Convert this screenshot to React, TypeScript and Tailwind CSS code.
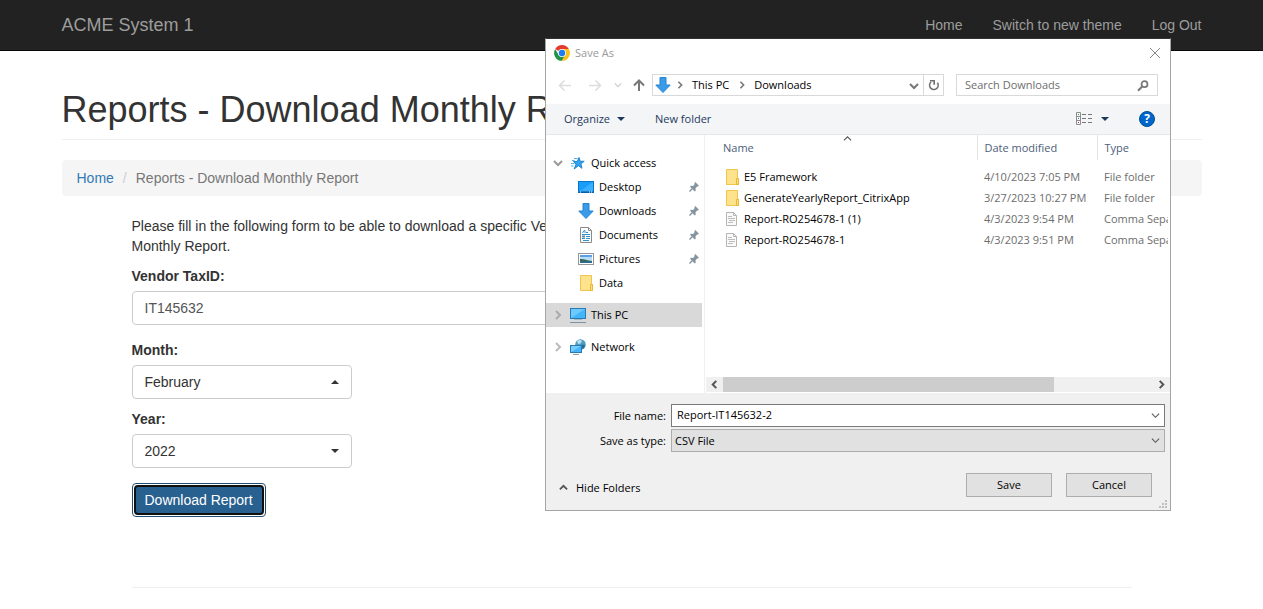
import React from "react";

type IconProps = { className?: string };

function ChromeIcon() {
  return (
    <svg viewBox="0 0 48 48" className="size-4 shrink-0" aria-hidden="true">
      <circle cx="24" cy="24" r="23.5" fill="#fff" />
      <path d="M24 24 L3.6 12.2 A23.5 23.5 0 0 1 44.4 12.2 L24 12.5 Z" fill="#e33b2e" />
      <path d="M3.6 12.2 A23.5 23.5 0 0 0 24 47.5 L34 29.7 L24 24 L14 29.7 Z" fill="#229342" />
      <path d="M44.4 12.2 A23.5 23.5 0 0 1 24 47.5 L34 29.7 L24 12.2 Z" fill="#fbc116" />
      <circle cx="24" cy="24" r="11.8" fill="#fff" />
      <circle cx="24" cy="24" r="9.6" fill="#1f7bf2" />
    </svg>
  );
}

function DownArrowIcon() {
  return (
    <svg viewBox="0 0 16 16" className="size-4 shrink-0" aria-hidden="true">
      <path d="M5 .5h6v7.5h4.2L8 15.5.8 8H5z" fill="#3a9be8" stroke="#2583cf" />
    </svg>
  );
}

function Chevron({
  dir,
  size = 8,
  color = "#555",
  width = 1.5,
}: {
  dir: "up" | "down" | "left" | "right";
  size?: number;
  color?: string;
  width?: number;
}) {
  const paths = {
    up: "M1 6l4-4 4 4",
    down: "M1 3l4 4 4-4",
    left: "M7 1L3 5l4 4",
    right: "M3 1l4 4-4 4",
  };
  return (
    <svg viewBox="0 0 10 10" width={size} height={size} fill="none" stroke={color} strokeWidth={width} className="shrink-0" aria-hidden="true">
      <path d={paths[dir]} />
    </svg>
  );
}

function NavArrow({ dir, className = "" }: { dir: "left" | "right" | "up" } & IconProps) {
  const paths = {
    left: "M13 7.500H1.500M6.500 2.500l-5 5 5 5",
    right: "M1 7.500h11.500M7.500 2.500l5 5-5 5",
    up: "M7 13V2.500M2 7.500l5-5 5 5",
  };
  return (
    <svg viewBox="0 0 14 14" className={"size-3.5 shrink-0 " + className} fill="none" stroke="currentColor" strokeWidth={dir === "up" ? 2 : 1.6} aria-hidden="true">
      <path d={paths[dir]} />
    </svg>
  );
}

function Triangle({ up = false, className = "" }: { up?: boolean } & IconProps) {
  return (
    <svg viewBox="0 0 8 4" className={"h-1 w-2 " + className} fill="currentColor" aria-hidden="true">
      <path d={up ? "M0 4l4-4 4 4z" : "M0 0h8L4 4z"} />
    </svg>
  );
}

function StarIcon() {
  return (
    <svg viewBox="0 0 16 16" className="size-4 shrink-0" aria-hidden="true">
      <path d="M9 2.500l1.200 3.700 4 .1-3.300 2.500 1.100 4.500-3.600-2.600-4.200 3.300 1.900-4.900L3.400 6.500h3.800z" fill="#2fa4f0" stroke="#1a7fc9" strokeWidth=".9" />
      <path d="M4 3.500h3.500M2 5.500h2.500M1 8.500h3.500M1 11h2.500" stroke="#4fb0ee" />
    </svg>
  );
}

function DesktopIcon() {
  return (
    <svg viewBox="0 0 16 16" className="size-4 shrink-0" aria-hidden="true">
      <rect x=".5" y="2.500" width="15" height="11" fill="#1a9df8" stroke="#0b74c4" />
      <path d="M1 13L15 3v10z" fill="#38b0ff" />
      <path d="M1 13h14" stroke="#064b86" />
      <path d="M2 13h1M11 13h1M13 13h1" stroke="#fff" />
    </svg>
  );
}

function DocumentIcon() {
  return (
    <svg viewBox="0 0 16 16" className="size-4 shrink-0" aria-hidden="true">
      <path d="M2.500.5h8l3 3v12h-11z" fill="#fff" stroke="#8a8a8a" />
      <path d="M10.500.5v3h3" fill="none" stroke="#8a8a8a" />
      <path d="M4.500 6l1.500-2.500h1V6M8 5.500h2M4 7.500h8M8 9.500h4M4 11.500h3M8 11.500h4M5 13.500h6" fill="none" stroke="#2a92cf" />
      <path d="M4 8.500h3v2H4z" fill="#5f8ba0" />
    </svg>
  );
}

function PictureIcon() {
  return (
    <svg viewBox="0 0 16 16" className="size-4 shrink-0" aria-hidden="true">
      <rect x=".5" y="2.500" width="15" height="11" fill="#fff" stroke="#969696" />
      <path d="M2 4h12v8H2z" fill="#b9dcf7" />
      <path d="M2 4h12v2H2z" fill="#5d9fe5" />
      <path d="M2 8c3-.5 6 1 12 2v2H2z" fill="#37654f" />
      <path d="M2 10.500h12V12H2z" fill="#2c6e9c" />
    </svg>
  );
}

function FolderIcon() {
  return (
    <svg viewBox="0 0 16 16" className="size-4 shrink-0" aria-hidden="true">
      <path d="M2.500.5h11v9h1v6h-12z" fill="#ffe28c" stroke="#eec54f" />
      <path d="M12.500 9.500h2v6h-2z" fill="#ffdf7d" stroke="#e6b834" />
    </svg>
  );
}

function FileIcon() {
  return (
    <svg viewBox="0 0 16 16" className="size-4 shrink-0" aria-hidden="true">
      <path d="M2.500 1.500h7l3 3v10h-10z" fill="#fafafa" stroke="#b5b5b5" />
      <path d="M9.500 1.500v3h3" fill="none" stroke="#b5b5b5" />
      <path d="M4 5.500h4M4 7.500h7M5 9.500h6M4 11.500h5" stroke="#bcbcbc" />
    </svg>
  );
}

function MonitorIcon() {
  return (
    <svg viewBox="0 0 16 16" className="size-4 shrink-0" aria-hidden="true">
      <rect x=".5" y="1.500" width="15" height="10" fill="#45b5fa" stroke="#2a7ab4" />
      <path d="M1 11L15 2H1z" fill="#6ccaff" />
      <path d="M4 12.500h8" stroke="#9fb7c6" />
      <path d="M0 15.500h16" stroke="#7d93a3" />
    </svg>
  );
}

function NetworkIcon() {
  return (
    <svg viewBox="0 0 16 16" className="size-4 shrink-0" aria-hidden="true">
      <circle cx="10.500" cy="5.500" r="5.300" fill="#4e9cc0" />
      <path d="M7 2c2-1.500 4-1 5 0l-1.500 2.500L8 5z" fill="#b9dfee" />
      <path d="M12 5.500l3 .5-1 3-2.500 1z" fill="#2b6d91" />
      <rect x=".5" y="6.500" width="11" height="7" fill="#45b5fa" stroke="#2a7ab4" />
      <path d="M1 13l10-6H1z" fill="#74ceff" />
      <path d="M3 15.500h6" stroke="#8aa0ae" />
    </svg>
  );
}

function PinIcon() {
  return (
    <svg viewBox="0 0 12 12" className="ml-auto size-3 shrink-0" aria-hidden="true">
      <path d="M7.200 1l3.800 3.800-1 .8-.9-.2-1.600 2 .2 2.300-1 .9L2 5.700l1-.9 2.200.2 1.500-2-.3-1z" fill="#8795a1" />
      <path d="M4.700 7.300L1.500 10.500" stroke="#8795a1" strokeWidth="1.400" />
    </svg>
  );
}

function ViewIcon() {
  return (
    <svg viewBox="0 0 16 14" className="h-3.5 w-4" fill="none" aria-hidden="true">
      <path d="M.5.5h4v12h-4zM.5 4.500h4M.5 8.500h4" stroke="#8d8d8d" />
      <path d="M6 2.500h4M12 2.500h4M6 6.500h4M12 6.500h4M6 10.500h4M12 10.500h4" stroke="#777" />
      <path d="M2 2.500h1" stroke="#3c9d55" />
      <path d="M2 6.500h1" stroke="#3a7de0" />
      <path d="M2 10.500h1" stroke="#e02b2b" />
    </svg>
  );
}

function Select({ id, value, up = false }: { id: string; value: string; up?: boolean }) {
  return (
    <div className="relative w-[220px]">
      <select
        id={id}
        defaultValue={value}
        className="block h-[34px] w-full appearance-none rounded border border-[#ccc] bg-white px-3 text-[#333] outline-none"
      >
        <option>{value}</option>
      </select>
      <Triangle up={up} className="pointer-events-none absolute right-[13px] top-[15px] text-[#333]" />
    </div>
  );
}

const pinned = [
  { name: "Desktop", icon: <DesktopIcon />, pin: true },
  { name: "Downloads", icon: <DownArrowIcon />, pin: true },
  { name: "Documents", icon: <DocumentIcon />, pin: true },
  { name: "Pictures", icon: <PictureIcon />, pin: true },
  { name: "Data", icon: <FolderIcon />, pin: false },
];

const files = [
  { name: "E5 Framework", date: "4/10/2023 7:05 PM", type: "File folder", folder: true },
  { name: "GenerateYearlyReport_CitrixApp", date: "3/27/2023 10:27 PM", type: "File folder", folder: true },
  { name: "Report-RO254678-1 (1)", date: "4/3/2023 9:54 PM", type: "Comma Separated Values", folder: false },
  { name: "Report-RO254678-1", date: "4/3/2023 9:51 PM", type: "Comma Separated Values", folder: false },
];

function SaveDialog() {
  return (
    <section
      role="dialog"
      aria-label="Save As"
      className="absolute left-[545px] top-[38px] w-[626px] border border-[#a5a5a5] border-t-[#333] bg-white font-['Open_Sans',sans-serif] text-[11px] leading-4 text-black"
    >
      <header className="flex h-7 items-center gap-[5px] pl-2 pr-[9px] text-[#999]">
        <ChromeIcon />
        <h2>Save As</h2>
        <button type="button" aria-label="Close" className="ml-auto">
          <svg viewBox="0 0 12 12" className="size-3" stroke="#888" fill="none" aria-hidden="true">
            <path d="M1 1l10 10M11 1L1 11" />
          </svg>
        </button>
      </header>

      <div className="flex h-[37px] items-center pb-px pr-3">
        <div className="flex w-[106px] items-center pl-3">
          <button type="button" aria-label="Back" className="text-[#ddd]"><NavArrow dir="left" /></button>
          <button type="button" aria-label="Forward" className="ml-4 text-[#ddd]"><NavArrow dir="right" /></button>
          <button type="button" aria-label="Recent locations" className="ml-3"><Chevron dir="down" size={8} color="#ccc" /></button>
          <button type="button" aria-label="Up" className="ml-2.5 text-[#777]"><NavArrow dir="up" /></button>
        </div>
        <div className="flex h-[22px] flex-1 items-center border border-[#d9d9d9] pl-0.5">
          <DownArrowIcon />
          <span className="ml-[5px] flex items-center gap-2">
            <Chevron dir="right" color="#777" width={2} />
            <a href="#this-pc">This PC</a>
            <span className="ml-px flex items-center gap-2">
              <Chevron dir="right" color="#777" width={2} />
              <a href="#downloads">Downloads</a>
            </span>
          </span>
          <button type="button" aria-label="Previous locations" className="ml-auto mr-1 pt-0.5">
            <Chevron dir="down" size={10} color="#777" width={2} />
          </button>
          <button type="button" aria-label="Refresh" className="grid h-full w-5 place-items-center border-l border-[#d9d9d9]">
            <svg viewBox="0 0 12 12" className="size-3" fill="none" stroke="#6f6f6f" strokeWidth="1.600" aria-hidden="true">
              <path d="M3 3A4.300 4.300 0 1 0 9.400 3.700" />
              <path d="M2 1.800h4.200v4" />
            </svg>
          </button>
        </div>
        <label className="ml-3 flex h-[22px] w-[202px] items-center border border-[#d9d9d9] pl-2 pr-2">
          <input
            aria-label="Search Downloads"
            placeholder="Search Downloads"
            className="min-w-0 flex-1 bg-transparent outline-none placeholder:text-[#6d6d6d]"
          />
          <svg viewBox="0 0 12 12" className="mt-0.5 size-3" fill="none" stroke="#777" aria-hidden="true">
            <circle cx="7.500" cy="4.200" r="3" strokeWidth="1.700" />
            <path d="M5.200 6.500L1 10.800" strokeWidth="2" />
          </svg>
        </label>
      </div>

      <div className="flex h-[31px] items-center border-b border-[#e5e7ea] bg-[#f4f5f7] pl-[18px] pr-[15px] text-[#1e395b]">
        <button type="button" className="flex items-center gap-[7px]">Organize <Triangle /></button>
        <button type="button" className="ml-[30px]">New folder</button>
        <button type="button" aria-label="Change your view" className="ml-auto flex items-center gap-[9px]">
          <ViewIcon />
          <Triangle />
        </button>
        <button
          type="button"
          aria-label="Help"
          className="ml-[30px] grid size-4 place-items-center rounded-full border border-[#00508f] bg-[#0066cc] text-xs font-bold leading-none text-white"
        >
          ?
        </button>
      </div>

      <div className="flex h-[258px]">
        <nav aria-label="Folders" className="w-[159px] border-r border-[#f0f0f0] pr-0.5 pt-4">
          <a href="#quick-access" className="flex h-6 items-center pl-[7px]">
            <Chevron dir="down" size={10} color="#999" width={2} />
            <span className="ml-[7px] flex items-center gap-[5px]"><StarIcon />Quick access</span>
          </a>
          <ul>
            {pinned.map((p) => (
              <li key={p.name}>
                <a href={"#" + p.name} className="flex h-6 items-center gap-[5px] pl-8 pr-0.5">
                  {p.icon}
                  {p.name}
                  {p.pin && <PinIcon />}
                </a>
              </li>
            ))}
          </ul>
          <a href="#pc" className="mt-2 flex h-6 items-center bg-[#d9d9d9] pl-[7px]">
            <Chevron dir="right" size={10} color="#aaa" width={2} />
            <span className="ml-[7px] flex items-center gap-[5px]"><MonitorIcon />This PC</span>
          </a>
          <a href="#network" className="mt-2 flex h-6 items-center pl-[7px]">
            <Chevron dir="right" size={10} color="#bbb" width={2} />
            <span className="ml-[7px] flex items-center gap-[5px]"><NetworkIcon />Network</span>
          </a>
        </nav>

        <div className="flex min-w-0 flex-1 flex-col pb-px">
          <div className="flex-1 overflow-hidden">
            <table className="w-full table-fixed whitespace-nowrap text-left">
              <colgroup>
                <col className="w-[272px]" />
                <col className="w-[120px]" />
                <col />
              </colgroup>
              <thead className="text-[#4c607a]">
                <tr className="h-[25px]">
                  <th className="relative p-0 pl-[18px] font-normal">
                    Name
                    <span className="absolute left-[138px] top-0"><Chevron dir="up" size={9} width={1.2} /></span>
                  </th>
                  <th className="border-l border-[#e5e5e5] p-0 pl-[7px] font-normal">Date modified</th>
                  <th className="border-l border-[#e5e5e5] p-0 pl-[7px] font-normal">Type</th>
                </tr>
              </thead>
              <tbody className="text-[#6d6d6d] before:block before:h-1.5">
                {files.map((f) => (
                  <tr key={f.name} className="h-[21px]">
                    <td className="p-0 pl-[19px] text-black">
                      <span className="flex items-center gap-1">
                        {f.folder ? <FolderIcon /> : <FileIcon />}
                        {f.name}
                      </span>
                    </td>
                    <td className="p-0 pl-[7px]">{f.date}</td>
                    <td className="p-0 pl-[7px] pr-0.5">
                      <span className="block overflow-hidden">{f.type}</span>
                    </td>
                  </tr>
                ))}
              </tbody>
            </table>
          </div>
          <div className="ml-px flex h-[15px] bg-[#f0f0f0]">
            <button type="button" aria-label="Scroll left" className="grid w-[17px] place-items-center">
              <Chevron dir="left" size={9} width={2.2} />
            </button>
            <div className="flex-1"><div className="h-full w-[77%] bg-[#cdcdcd]" /></div>
            <button type="button" aria-label="Scroll right" className="grid w-[17px] place-items-center">
              <Chevron dir="right" size={9} width={2.2} />
            </button>
          </div>
        </div>
      </div>

      <footer className="relative bg-[#f0f0f0] pb-[13px] pr-[5px] pt-[11px]">
        <div className="grid grid-cols-[120px_1fr] items-center gap-x-[5px] gap-y-0.5">
          <label htmlFor="file-name" className="text-right">File name:</label>
          <div className="flex h-[23px] items-center border border-[#7a7a7a] bg-white pr-1">
            <input id="file-name" defaultValue="Report-IT145632-2" className="min-w-0 flex-1 bg-transparent pb-0.5 pl-[5px] outline-none" />
            <button type="button" aria-label="Previous file names"><Chevron dir="down" size={9} width={1.2} /></button>
          </div>
          <label htmlFor="file-type" className="text-right">Save as type:</label>
          <div className="relative">
            <select id="file-type" className="block h-[23px] w-full appearance-none border border-[#adadad] bg-[#e1e1e1] px-[3px] outline-none">
              <option>CSV File</option>
            </select>
            <span className="pointer-events-none absolute right-[5px] top-[7px]"><Chevron dir="down" size={9} width={1.2} /></span>
          </div>
        </div>
        <div className="mt-[21px] flex items-start gap-3.5 px-[13px]">
          <button type="button" className="mr-auto mt-[7px] flex items-center gap-2">
            <Chevron dir="up" size={9} width={2} />
            Hide Folders
          </button>
          <button type="button" className="h-6 w-[86px] border border-[#adadad] bg-[#e1e1e1]">Save</button>
          <button type="button" className="h-6 w-[86px] border border-[#adadad] bg-[#e1e1e1]">Cancel</button>
        </div>
        <svg viewBox="0 0 8 8" className="absolute bottom-0.5 right-[3px] size-2" fill="#bfbfbf" aria-hidden="true">
          <path d="M6 0h2v2H6zM3 3h2v2H3zM6 3h2v2H6zM0 6h2v2H0zM3 6h2v2H3zM6 6h2v2H6z" />
        </svg>
      </footer>
    </section>
  );
}

export default function App() {
  return (
    <div className="relative min-h-screen bg-white font-['Liberation_Sans',Arial,sans-serif] text-sm text-[#333]">
      <div className="border-b border-[#080808] bg-[#222] text-[#9d9d9d]">
        <div className="mx-auto flex h-[50px] max-w-[1170px] items-center px-[15px]">
          <a href="#brand" className="mr-auto text-lg">ACME System 1</a>
          <nav className="flex gap-[30px]">
            <a href="#home">Home</a>
            <a href="#theme">Switch to new theme</a>
            <a href="#logout">Log Out</a>
          </nav>
        </div>
      </div>

      <main className="mx-auto max-w-[1170px] px-[15px]">
        <h1 className="mt-[39px] border-b border-[#eee] pb-[9px] text-4xl leading-10">Reports - Download Monthly Report</h1>
        <ol className="mt-5 flex rounded bg-[#f5f5f5] px-[15px] py-2">
          <li><a href="#home" className="text-[#337ab7]">Home</a></li>
          <li className="text-[#777] before:px-[9px] before:text-[#ccc] before:content-['/']">
            Reports - Download Monthly Report
          </li>
        </ol>

        <form className="mx-auto mt-5 max-w-[1000px] border-b border-[#eee] pb-[70px]">
          <p className="max-w-[480px]">
            Please fill in the following form to be able to download a specific Vendor Monthly Report.
          </p>
          <label htmlFor="tax-id" className="mb-[5px] mt-2.5 block font-bold">Vendor TaxID:</label>
          <input
            id="tax-id"
            defaultValue="IT145632"
            className="block h-[34px] w-full rounded border border-[#ccc] px-3 text-[#555] outline-none"
          />
          <label htmlFor="month" className="mb-[5px] mt-[15px] block font-bold">Month:</label>
          <Select id="month" value="February" up />
          <label htmlFor="year" className="mb-[5px] mt-2.5 block font-bold">Year:</label>
          <Select id="year" value="2022" />
          <button
            type="button"
            className="mt-[15px] block h-[34px] rounded border border-[#204d74] bg-white p-px text-white"
          >
            <span className="flex h-[30px] items-center rounded border-2 border-[#101010] bg-[#286090] px-[9px]">Download Report</span>
          </button>
        </form>
      </main>

      <SaveDialog />
    </div>
  );
}
